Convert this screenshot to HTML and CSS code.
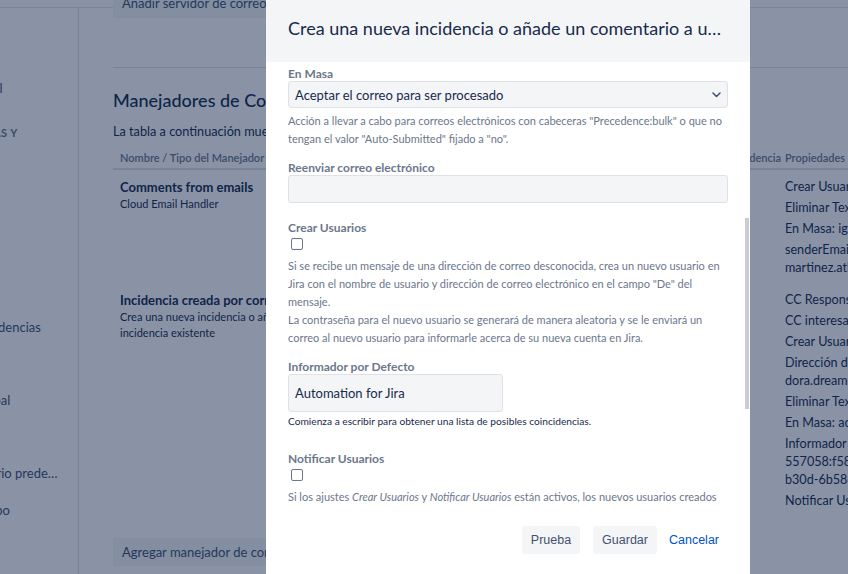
FILE: index.html
```html
<!DOCTYPE html>
<html lang="es">
<head>
    <meta charset="UTF-8">
    <meta name="viewport" content="width=device-width, initial-scale=1.0">
    <title>Correo entrante</title>
    <link rel="stylesheet" href="styles.css">
</head>
<body>
    <div class="page">
        <div class="topbar"></div>
        <div class="layout">
            <nav class="sidebar">
                <ul class="nav">
                    <li>Atributos</li>
                    <li>Configuración general</li>
                    <li class="nav-heading">Correos, plantillas y formularios</li>
                    <li>Anuncios</li>
                    <li>Ayuda</li>
                    <li>Idioma</li>
                    <li>Paneles</li>
                    <li>Recopiladores de incidencias</li>
                    <li>Tareas</li>
                    <li>Envíos de correo global</li>
                    <li>Enlaces</li>
                    <li>Plantillas del formulario predeterminado</li>
                    <li>Seguimiento de tiempo</li>
                </ul>
            </nav>

            <main class="main">
                <button class="btn top-btn">Añadir servidor de correo entrante</button>
                <hr class="divider">
                <h2>Manejadores de Correo</h2>
                <p class="intro">La tabla a continuación muestra los manejadores de correo configurados para este sitio.</p>

                <table class="handlers">
                    <colgroup>
                        <col class="col-name">
                        <col class="col-server">
                        <col class="col-project">
                        <col class="col-props">
                        <col class="col-ops">
                    </colgroup>
                    <thead>
                        <tr>
                            <th>Nombre / Tipo del Manejador</th>
                            <th>Servidor de correo</th>
                            <th>Proyecto / Tipo de Incidencia</th>
                            <th>Propiedades</th>
                            <th>Operaciones</th>
                        </tr>
                    </thead>
                    <tbody>
                        <tr>
                            <td>
                                <div class="handler-name">Comments from emails</div>
                                <div class="handler-type">Cloud Email Handler</div>
                            </td>
                            <td>Correo en la nube</td>
                            <td>Soporte / Tarea</td>
                            <td>
                                <ul class="props">
                                    <li>Crear Usuarios: false</li>
                                    <li>Eliminar Texto Citado: false</li>
                                    <li>En Masa: ignorar</li>
                                    <li>senderEmail: jira@carlos-<br>martinez.atlassian.net</li>
                                </ul>
                            </td>
                            <td>Editar</td>
                        </tr>
                        <tr>
                            <td>
                                <div class="handler-name">Incidencia creada por correo</div>
                                <div class="handler-type">Crea una nueva incidencia o añade un comentario a una incidencia existente</div>
                            </td>
                            <td>Correo en la nube</td>
                            <td>Soporte / Tarea</td>
                            <td>
                                <ul class="props">
                                    <li>CC Responsable: false</li>
                                    <li>CC interesados: false</li>
                                    <li>Crear Usuarios: false</li>
                                    <li>Dirección de correo:<br>dora.dreams@example.com</li>
                                    <li>Eliminar Texto Citado: false</li>
                                    <li>En Masa: aceptar</li>
                                    <li>Informador por Defecto:<br>557058:f58131cb-b67d-4f6e-<br>b30d-6b58d545168f</li>
                                    <li>Notificar Usuarios: false</li>
                                </ul>
                            </td>
                            <td>Editar</td>
                        </tr>
                    </tbody>
                </table>

                <button class="btn add-btn">Agregar manejador de correo entrante</button>
            </main>
        </div>
    </div>

    <div class="blanket"></div>

    <div class="modal">
        <div class="modal-header">
            <h3 class="modal-title">Crea una nueva incidencia o añade un comentario a una incidencia existente</h3>
        </div>

        <div class="modal-body" id="modal-body">
            <div class="field field-input">
                <label class="label">Nombre</label>
                <input type="text" class="text" value="Incidencia creada por correo">
            </div>
            <div class="field">
                <label class="label">Proyecto</label>
                <div class="select-wrap">
                    <select class="select"><option>Soporte (SUP)</option></select>
                    <svg class="chevron" width="9" height="6" viewBox="0 0 9 6"><path d="M1 1l3.5 3.5L8 1" fill="none" stroke="#42526e" stroke-width="1.5" stroke-linecap="round" stroke-linejoin="round"/></svg>
                </div>
                <div class="desc">Proyecto por defecto en el que se crearán las nuevas incidencias.</div>
            </div>
            <div class="field">
                <label class="label">Tipo de Incidencia</label>
                <div class="select-wrap">
                    <select class="select"><option>Tarea</option></select>
                    <svg class="chevron" width="9" height="6" viewBox="0 0 9 6"><path d="M1 1l3.5 3.5L8 1" fill="none" stroke="#42526e" stroke-width="1.5" stroke-linecap="round" stroke-linejoin="round"/></svg>
                </div>
                <div class="desc">Tipo de incidencia por defecto para las nuevas incidencias.</div>
            </div>
            <div class="field">
                <label class="label">Eliminar Texto Citado</label>
                <input type="checkbox" class="check">
                <div class="desc">Si está activo, el texto citado se eliminará de los comentarios que se creen a partir de las respuestas de correo.</div>
            </div>
            <div class="field field-input">
                <label class="label">Dividir Expresión Regular</label>
                <input type="text" class="text">
            </div>

            <div class="field" id="field-bulk">
                <label class="label">En Masa</label>
                <div class="select-wrap">
                    <select class="select"><option>Aceptar el correo para ser procesado</option></select>
                    <svg class="chevron" width="9" height="6" viewBox="0 0 9 6"><path d="M1 1l3.5 3.5L8 1" fill="none" stroke="#42526e" stroke-width="1.5" stroke-linecap="round" stroke-linejoin="round"/></svg>
                </div>
                <div class="desc">Acción a llevar a cabo para correos electrónicos con cabeceras "Precedence:bulk" o que no tengan el valor "Auto-Submitted" fijado a "no".</div>
            </div>
            <div class="field field-input">
                <label class="label">Reenviar correo electrónico</label>
                <input type="text" class="text">
            </div>
            <div class="field">
                <label class="label">Crear Usuarios</label>
                <input type="checkbox" class="check">
                <div class="desc">Si se recibe un mensaje de una dirección de correo desconocida, crea un nuevo usuario en Jira con el nombre de usuario y dirección de correo electrónico en el campo "De" del mensaje.<br>La contraseña para el nuevo usuario se generará de manera aleatoria y se le enviará un correo al nuevo usuario para informarle acerca de su nueva cuenta en Jira.</div>
            </div>
            <div class="field">
                <label class="label">Informador por Defecto</label>
                <input type="text" class="text user-picker" value="Automation for Jira">
                <div class="help">Comienza a escribir para obtener una lista de posibles coincidencias.</div>
            </div>
            <div class="field">
                <label class="label">Notificar Usuarios</label>
                <input type="checkbox" class="check">
                <div class="desc">Si los ajustes <em>Crear Usuarios</em> y <em>Notificar Usuarios</em> están activos, los nuevos usuarios creados recibirán un correo con su nombre de usuario y contraseña.</div>
            </div>
            <div class="field">
                <label class="label">CC Responsable</label>
                <input type="checkbox" class="check">
                <div class="desc">Si el responsable está en copia, se le asignará la nueva incidencia.</div>
            </div>
            <div class="field">
                <label class="label">CC interesados</label>
                <input type="checkbox" class="check">
                <div class="desc">Los usuarios en copia se añadirán como interesados.</div>
            </div>
            <div class="field field-input">
                <label class="label">Dirección de correo predeterminada</label>
                <input type="text" class="text">
            </div>
        </div>

        <div class="scroll-thumb" id="scroll-thumb"></div>

        <div class="modal-footer">
            <button class="btn footer-btn test-btn">Prueba</button>
            <button class="btn footer-btn">Guardar</button>
            <a class="link-btn" href="#">Cancelar</a>
        </div>
    </div>

    <script src="script.js"></script>
</body>
</html>
```

FILE: styles.css
```css
html, body {
    margin: 0;
    height: 100%;
    overflow: hidden;
}
body {
    font-family: "Lato", "Noto Sans", sans-serif;
    font-size: 13px;
    color: #172b4d;
    background: #fff;
}
.page {
    width: 1300px;
}
.topbar {
    height: 7px;
    border-bottom: 1px solid #dfe1e6;
}
.layout {
    display: flex;
}
.sidebar {
    flex: none;
    width: 79px;
    height: 566px;
    box-sizing: border-box;
    border-right: 1px solid #dfe1e6;
    overflow: hidden;
}
.nav {
    list-style: none;
    margin: 0 0 0 -130px;
    padding: 25px 8px 0;
    width: 181px;
    color: #42526e;
}
.nav li {
    line-height: 20px;
    padding: 8.25px 0;
    white-space: nowrap;
    overflow: hidden;
    text-overflow: ellipsis;
}
.nav .nav-heading {
    white-space: normal;
    font-size: 11px;
    font-weight: 700;
    line-height: 16px;
    letter-spacing: 0.5px;
    text-transform: uppercase;
    color: #6b778c;
    padding: 0;
    margin: 19px 0 6px;
}
.main {
    flex: 1;
    padding-left: 34px;
}
.btn {
    font-family: inherit;
    font-size: 13px;
    color: #42526e;
    background: #f4f5f7;
    border: none;
    border-radius: 3px;
    height: 30px;
    padding: 0 9px;
}
.top-btn {
    display: block;
    margin-top: -20px;
}
.divider {
    border: 0;
    border-top: 1px solid #dfe1e6;
    margin: 49px 0 0;
}
h2 {
    font-size: 18px;
    font-weight: 500;
    line-height: 24px;
    margin: 20px 0 0;
}
.intro {
    font-size: 12.7px;
    line-height: 20px;
    margin: 9px 0 0;
}
.handlers {
    margin-top: 5px;
    border-collapse: collapse;
    table-layout: fixed;
    width: 1085px;
}
.col-name { width: 300px; }
.col-server { width: 219px; }
.col-project { width: 146px; }
.col-props { width: 300px; }
.col-ops { width: 120px; }
.handlers th {
    text-align: left;
    font-size: 11px;
    font-weight: 600;
    line-height: 16px;
    color: #6b778c;
    padding: 4px 7px 2px;
    border-bottom: 2px solid #dfe1e6;
    white-space: nowrap;
}
.handlers td {
    vertical-align: top;
    padding: 8px 7px 6px;
}
.handler-name {
    font-weight: 700;
    line-height: 18px;
}
.handler-type {
    font-size: 11px;
    line-height: 16px;
}
.props {
    list-style: none;
    margin: 0;
    padding: 0;
    font-size: 12.6px;
}
.props li {
    line-height: 18px;
    margin-bottom: 3px;
    white-space: nowrap;
}
.props li:last-child {
    margin-bottom: 0;
}
.add-btn {
    display: block;
    margin-top: 22px;
    height: 28px;
}
.blanket {
    position: fixed;
    top: 0;
    left: 0;
    right: 0;
    bottom: 0;
    background: rgba(9, 30, 66, 0.48);
}
.modal {
    position: fixed;
    top: 0;
    left: 266px;
    width: 484px;
    height: 574px;
    background: #fff;
    display: flex;
    flex-direction: column;
}
.modal-header {
    flex: none;
    height: 62px;
    box-sizing: border-box;
    padding: 17px 27px 0 22px;
    background: #f4f5f7;
}
.modal-title {
    margin: 0;
    font-size: 18px;
    font-weight: 400;
    line-height: 22px;
    white-space: nowrap;
    overflow: hidden;
    text-overflow: ellipsis;
}
.modal-body {
    position: relative;
    flex: 1;
    overflow-y: auto;
    padding: 20px 22px;
}
.scroll-thumb {
    position: absolute;
    left: 479px;
    width: 4px;
    background: #c9ccd1;
}
.field {
    margin-top: 13px;
}
.field:first-child {
    margin-top: 0;
}
.field-input {
    padding-bottom: 5px;
}
.label {
    display: block;
    font-size: 12px;
    font-weight: 700;
    line-height: 14px;
    color: #6b778c;
}
.select-wrap {
    position: relative;
}
.select,
.text {
    display: block;
    box-sizing: border-box;
    width: 100%;
    height: 28px;
    margin: 0;
    padding: 0 6px;
    font-family: inherit;
    font-size: 13px;
    color: #172b4d;
    background: #f4f5f7;
    border: 1px solid #dfe1e6;
    border-radius: 3px;
    outline: none;
}
.select {
    height: 27px;
    appearance: none;
}
.chevron {
    position: absolute;
    right: 7px;
    top: 11px;
}
.user-picker {
    width: 215px;
    height: 38px;
}
.desc {
    margin-top: 4px;
    font-size: 11px;
    line-height: 18px;
    color: #6b778c;
}
.check {
    appearance: none;
    display: block;
    width: 12px;
    height: 12px;
    margin: 3px 0 0 3px;
    border: 1px solid #6b778c;
    border-radius: 2px;
    background: #fff;
}
.check + .desc {
    margin-top: 7px;
}
.help {
    margin-top: 2px;
    padding-bottom: 11px;
    font-size: 10.2px;
    line-height: 14px;
    color: #172b4d;
}
.modal-footer {
    flex: none;
    display: flex;
    justify-content: flex-end;
    align-items: center;
    gap: 4px;
    padding: 17px 23px 20px;
}
.footer-btn {
    font-family: "Liberation Sans", Arial, sans-serif;
    font-size: 12.5px;
    height: 28px;
    padding: 0 9px;
}
.test-btn {
    margin-right: 9px;
}
.link-btn {
    font-family: "Liberation Sans", Arial, sans-serif;
    font-size: 12.5px;
    color: #0052cc;
    text-decoration: none;
    padding: 0 8px;
    line-height: 28px;
}
```

FILE: script.js
```js
// abrir el formulario desplazado hasta el campo "En Masa"
const body = document.getElementById("modal-body");
const bulk = document.getElementById("field-bulk");
const thumb = document.getElementById("scroll-thumb");

body.scrollTop = bulk.offsetTop - 5;

const ratio = body.clientHeight / body.scrollHeight;
thumb.style.height = Math.round(body.clientHeight * ratio) + "px";
thumb.style.top = Math.round(body.offsetTop + body.scrollTop * ratio - 3) + "px";
```
